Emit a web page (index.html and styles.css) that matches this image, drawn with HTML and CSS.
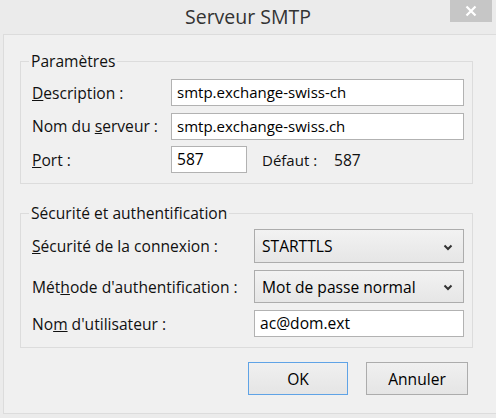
FILE: index.html
```html
<!DOCTYPE html>
<html lang="fr">
<head>
<meta charset="utf-8">
<title>Serveur SMTP</title>
<link rel="stylesheet" href="styles.css">
</head>
<body>
<div class="window">
  <div class="titlebar">
    <span class="title">Serveur SMTP</span>
    <div class="close">
      <svg width="12" height="12" viewBox="0 0 12 12"><path d="M1.5 1.5 L10.5 10.5 M10.5 1.5 L1.5 10.5" stroke="#fff" stroke-width="2.2" fill="none"/></svg>
    </div>
  </div>
  <div class="panel">
    <div class="group g1">
      <div class="group-title">Paramètres</div>
      <div class="rows rows1">
        <label class="lbl"><u>D</u>escription :</label>
        <div class="field">smtp.exchange-swiss-ch</div>
        <label class="lbl">Nom du <u>s</u>erveur :</label>
        <div class="field">smtp.exchange-swiss.ch</div>
        <label class="lbl"><u>P</u>ort :</label>
        <div class="port-line">
          <div class="field port">587</div>
          <span class="def-lbl">Défaut :</span>
          <span class="def-val">587</span>
        </div>
      </div>
    </div>
    <div class="group g2">
      <div class="group-title">Sécurité et authentification</div>
      <div class="rows rows2">
        <label class="lbl"><u>S</u>écurité de la connexion :</label>
        <div class="select s1"><span>STARTTLS</span>
          <svg class="chev" width="10" height="7" viewBox="0 0 10 7"><path d="M1.5 1.5 L5 5 L8.5 1.5" stroke="#333" stroke-width="2" fill="none"/></svg>
        </div>
        <label class="lbl">Mét<u>h</u>ode d'authentification :</label>
        <div class="select s2"><span>Mot de passe normal</span>
          <svg class="chev" width="10" height="7" viewBox="0 0 10 7"><path d="M1.5 1.5 L5 5 L8.5 1.5" stroke="#333" stroke-width="2" fill="none"/></svg>
        </div>
        <label class="lbl">No<u>m</u> d'utilisateur :</label>
        <div class="field user">ac@dom.ext</div>
      </div>
    </div>
    <div class="buttons">
      <button class="btn ok">OK</button>
      <button class="btn">Annuler</button>
    </div>
  </div>
</div>
</body>
</html>
```
FILE: styles.css
```css
html, body {
  margin: 0;
  padding: 0;
}
body {
  width: 496px;
  height: 418px;
  background: #ebebeb;
  font-family: "Open Sans", "Noto Sans", "Liberation Sans", sans-serif;
  color: #111;
  overflow: hidden;
}
.window {
  width: 496px;
  height: 418px;
}
.titlebar {
  position: relative;
  height: 34px;
  display: flex;
  justify-content: center;
  align-items: center;
}
.title {
  font-size: 19.5px;
  color: #333;
  margin-top: -2px;
}
.close {
  position: absolute;
  top: 0;
  left: 450px;
  width: 42px;
  height: 22px;
  background: #c6c6c6;
  display: flex;
  align-items: center;
  justify-content: center;
}
.panel {
  margin-left: 3px;
  width: 487px;
  height: 378px;
  border: 1px solid #dcdcdc;
  background: #f0f0f0;
  padding-left: 16px;
}
.group {
  width: 451px;
  border: 1px solid #dcdcdc;
}
.g1 {
  margin-top: 26px;
  padding-bottom: 10px;
}
.g2 {
  margin-top: 29px;
  padding-bottom: 10px;
}
.group-title {
  display: block;
  width: max-content;
  font-size: 15.6px;
  line-height: 20px;
  height: 20px;
  margin: -11px 0 0 8px;
  padding: 0 2px;
  background: #f0f0f0;
}
.rows {
  display: grid;
  align-items: center;
  padding-left: 11px;
  padding-right: 8px;
}
.rows1 {
  grid-template-columns: 139px 1fr;
  row-gap: 6.5px;
  padding-top: 8px;
}
.rows2 {
  grid-template-columns: 222px 1fr;
  row-gap: 7px;
  padding-top: 6px;
}
.lbl {
  font-size: 15.6px;
  white-space: nowrap;
}
.field {
  height: 25px;
  border: 1px solid #b2b2b2;
  background: #fff;
  font-size: 15px;
  line-height: 25px;
  padding-left: 5px;
  color: #000;
}
.field.user {
  font-size: 15.6px;
}
.port-line {
  display: flex;
  align-items: center;
}
.field.port {
  width: 69px;
  font-size: 15.6px;
}
.def-lbl {
  font-size: 15px;
  margin-left: 15px;
  width: 72px;
}
.def-val {
  font-size: 15.6px;
}
.select {
  border: 1px solid #acacac;
  background: linear-gradient(#f2f2f2, #e6e6e6);
  font-size: 15.6px;
  display: flex;
  align-items: center;
  justify-content: space-between;
  padding: 0 10px 0 7px;
  color: #000;
}
.s1 { height: 32px; }
.s2 { height: 31px; }
.chev { margin-top: 2px; }
.buttons {
  width: 448px;
  display: flex;
  justify-content: flex-end;
  gap: 18px;
  margin-top: 14px;
}
.btn {
  height: 33px;
  border: 1px solid #acacac;
  background: linear-gradient(#f0f0f0, #e5e5e5);
  font-family: "Open Sans", "Noto Sans", "Liberation Sans", sans-serif;
  font-size: 15.6px;
  color: #000;
  padding: 0;
  width: 102px;
}
.btn.ok {
  width: 100px;
  border-color: #5fa3e6;
}
```
